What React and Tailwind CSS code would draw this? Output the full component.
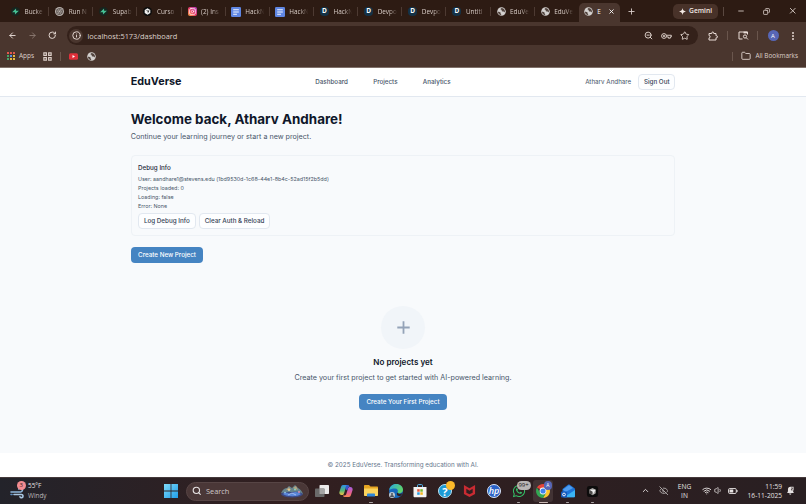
import React from 'react';
import {
    ArrowLeft, ArrowRight, RotateCw, Info, X, Plus, Minus, Copy,
    ZoomOut, Star, Folder, Search, ChevronUp, EyeOff, Wifi, Volume1,
    MoreVertical, Instagram,
} from 'lucide-react';
import { FaWhatsapp } from 'react-icons/fa';
import { SiOpenai } from 'react-icons/si';

/* ---------- Favicons ---------- */

const SupabaseIcon = () => (
    <svg viewBox="0 0 16 16" className="w-[9px] h-[9px]">
        <circle cx="8" cy="8" r="8" fill="#17251f" />
        <path d="M9 2.5v4h5L7 13.5v-4H2z" fill="#46c093" />
    </svg>
);

const OpenAiIcon = () => (
    <span className="w-[9px] h-[9px] rounded-full bg-[#b9b2ae] flex items-center justify-center">
        <SiOpenai size={7} color="#3a302c" />
    </span>
);

const CursorIcon = () => (
    <svg viewBox="0 0 16 16" className="w-[9px] h-[9px]">
        <circle cx="8" cy="8" r="8" fill="#0c0c0c" />
        <path d="M8 2.4l5 2.8v5.6l-5 2.8-5-2.8V5.200z" fill="#f1f1f1" />
        <path d="M5 6h6.500L8.500 11.500V8z" fill="#2a2a2a" />
    </svg>
);

const InstagramIcon = () => (
    <span className="w-[9px] h-[9px] rounded-[2px] bg-linear-to-tr from-[#f9a03a] via-[#e8386b] to-[#b23bc4] flex items-center justify-center">
        <Instagram size={7} color="#fff" strokeWidth={2.2} />
    </span>
);

const DocsIcon = () => (
    <svg viewBox="0 0 16 16" className="w-[10px] h-[10px]">
        <rect width="16" height="16" rx="2" fill="#5f86e3" />
        <path d="M3.5 4.5h9M3.5 8h9M3.5 11.5h6" stroke="#f2f5ff" strokeWidth="1.7" />
    </svg>
);

const DevpostIcon = () => (
    <span className="w-[9px] h-[9px] rounded-[4px] bg-[#143247] text-white text-[6.500px] leading-none font-bold flex items-center justify-center">
        D
    </span>
);

const GlobeIcon = () => (
    <svg viewBox="0 0 16 16" className="w-[9px] h-[9px]">
        <circle cx="8" cy="8" r="7.6" fill="#d3d0ce" />
        <path
            d="M1.6 8.6c2 .2 4.4.2 4.8 1.6.3 1.3-.2 2 1 3.2.4.5.2 1 0 1.2C4.2 14.2 1.7 12 1.6 8.6zM8.4 1.7c-1 .8-2 1-2 2.200 0 1 1.300.8 1.800 1.500.6.9-.2 1.600.8 2 1.400.5 1.700 0 2.800.8.8.6 1 1.300 2.200 1.200.9-3.600-1.400-7.300-5.600-7.700z"
            fill="#51433d"
        />
    </svg>
);

const tabs = [
    { icon: SupabaseIcon, title: 'Bucke' },
    { icon: OpenAiIcon, title: 'Run N' },
    { icon: SupabaseIcon, title: 'Supab' },
    { icon: CursorIcon, title: 'Curso' },
    { icon: InstagramIcon, title: '(2) Ins' },
    { icon: DocsIcon, title: 'HackN' },
    { icon: DocsIcon, title: 'HackN' },
    { icon: DevpostIcon, title: 'HackN' },
    { icon: DevpostIcon, title: 'Devpo' },
    { icon: DevpostIcon, title: 'Devpo' },
    { icon: DevpostIcon, title: 'Untitl' },
    { icon: GlobeIcon, title: 'EduVe' },
    { icon: GlobeIcon, title: 'EduVe' },
];

/* ---------- Browser chrome ---------- */

const TabStrip = () => (
    <div className="h-[22px] bg-[#2d1b13] flex items-center pl-[5px] text-[#d9cdc7]">
        {tabs.map(({ icon: Icon, title }, i) => (
            <div key={i} className="w-[44.15px] h-[22px] shrink-0 flex items-center pl-[5.5px] pt-px">
                <span className="w-[10px] flex justify-center shrink-0"><Icon /></span>
                <span className="ml-[4px] w-[22px] shrink-0 whitespace-nowrap text-[6.4px] leading-[10px] [mask-image:linear-gradient(to_right,black_50%,transparent_88%)]">
                    {title}
                </span>
                <span className={`ml-auto w-px h-[9px] ${i < 12 ? 'bg-[#4d3a32]' : ''}`} />
            </div>
        ))}
        <div className="w-[41px] h-[19px] self-end shrink-0 rounded-t-[5px] bg-[#4a362e] flex items-center pl-[5.5px] pb-[2px]">
            <GlobeIcon />
            <span className="ml-[4px] w-[6px] whitespace-nowrap text-[6.4px] leading-[10px] text-white">E</span>
            <X size={7} strokeWidth={3} className="ml-[5px] text-white" />
        </div>
        <Plus size={9} strokeWidth={2.4} className="ml-[7px] shrink-0" />
        <div className="ml-[37px] w-[45.5px] h-[15px] shrink-0 rounded-[5px] bg-[#483229] text-[#f3e9e4] flex items-center justify-center gap-[3px]">
            <svg viewBox="0 0 16 16" className="w-[7px] h-[7px]">
                <path d="M8 0c.8 4.8 3.2 7.200 8 8-4.800.8-7.200 3.200-8 8-.8-4.800-3.200-7.200-8-8 4.800-.8 7.200-3.200 8-8z" fill="currentColor" />
            </svg>
            <span className="text-[6.7px] leading-[10px] font-semibold">Gemini</span>
        </div>
        <span className="ml-[5px] w-px h-[9px] shrink-0 bg-[#5a4840]" />
        <Minus size={8} strokeWidth={2.6} className="ml-[13px] shrink-0" />
        <Copy size={7} strokeWidth={2.8} className="ml-[18px] shrink-0 -scale-x-100" />
        <X size={9.5} strokeWidth={2.3} className="ml-[18px] shrink-0" />
    </div>
);

const KeyIcon = () => (
    <svg viewBox="0 0 22 12" className="w-[11px] h-[6px]" fill="none" stroke="currentColor" strokeWidth="1.8">
        <circle cx="6" cy="6" r="4.8" />
        <circle cx="6" cy="6" r="1.2" fill="currentColor" />
        <path d="M10.8 4.5h9.8v3.3h-2v2.5h-4v-2.5h-3.8" />
    </svg>
);

const ExtensionIcon = () => (
    <svg viewBox="0 0 20 20" className="w-[10px] h-[10px]" fill="none" stroke="currentColor" strokeWidth="2">
        <path d="M2 5h5.5V4a2 2 0 0 1 4 0v1H16v4.5h1a1.9 1.9 0 0 1 0 4h-1V18H2v-4.2a2.3 2.3 0 0 0 0-4.6z" strokeLinejoin="round" />
    </svg>
);

const SidePanelSearchIcon = () => (
    <svg viewBox="0 0 22 18" className="w-[11px] h-[9px]" fill="none" stroke="currentColor" strokeWidth="2">
        <path d="M9 16H2V2h17v5" />
        <path d="M11 3h8" strokeWidth="3.5" />
        <circle cx="14" cy="11" r="3.2" />
        <path d="M16.500 13.500l3.5 3.5" />
    </svg>
);

const Toolbar = () => (
    <div className="h-[26px] bg-[#4a362e] flex items-center text-[#e9dcd6] pl-[8px] pt-px">
        <ArrowLeft size={9} strokeWidth={2.5} className="shrink-0" />
        <ArrowRight size={9} strokeWidth={2.3} className="ml-[11px] shrink-0 text-[#8f7e76]" />
        <RotateCw size={8.5} strokeWidth={2.7} className="ml-[11px] shrink-0" />
        <div className="ml-[10.5px] w-[631px] h-[19px] shrink-0 rounded-full bg-[#34211a] flex items-center pl-[2px] pr-[8.5px]">
            <span className="w-[14px] h-[14px] rounded-full bg-[#4a362e] flex items-center justify-center">
                <Info size={9} strokeWidth={2.5} />
            </span>
            <span className="ml-[4.5px] text-[7.4px] leading-[12px] text-[#ded2cc]">
                localhost:5173/dashboard
            </span>
            <div className="ml-auto flex items-center">
                <ZoomOut size={9} strokeWidth={2.4} />
                <span className="ml-[8.5px]"><KeyIcon /></span>
                <Star size={9.5} strokeWidth={2.2} className="ml-[8px]" />
            </div>
        </div>
        <span className="ml-[10px]"><ExtensionIcon /></span>
        <span className="ml-[9px] w-px h-[9px] bg-[#6a564d]" />
        <span className="ml-[9.5px]"><SidePanelSearchIcon /></span>
        <span className="ml-[8.5px] w-px h-[9px] bg-[#6a564d]" />
        <span className="ml-[9.5px] w-[11px] h-[11px] rounded-full bg-[#5766b6] text-white text-[6px] leading-none flex items-center justify-center">A</span>
        <MoreVertical size={10} strokeWidth={2.8} className="ml-[9.5px]" />
    </div>
);

const appColors = [
    'bg-[#e2574c]', 'bg-[#e2574c]', 'bg-[#e2574c]',
    'bg-[#46a567]', 'bg-[#5a8fe0]', 'bg-[#e8b941]',
    'bg-[#46a567]', 'bg-[#e8b941]', 'bg-[#e8b941]',
];

const BookmarksBar = () => (
    <div className="h-[20px] bg-[#4a362e] border-b border-[#80716a] flex items-center text-[#ddd0ca] pl-[7px] pr-[8px] pb-[3px]">
        <div className="grid grid-cols-3 gap-[1px]">
            {appColors.map((color, i) => (
                <span key={i} className={`w-[2px] h-[2px] ${color}`} />
            ))}
        </div>
        <span className="ml-[4px] text-[6.5px] leading-[10px]">Apps</span>
        <svg viewBox="0 0 16 16" className="ml-[8.5px] w-[9px] h-[9px]" fill="none" stroke="currentColor" strokeWidth="2">
            <path d="M1.5 1.5h4.500v4.500H1.500zM10 1.500h4.500v4.500H10zM1.500 10h4.500v4.500H1.500zM10 10h4.500v4.500H10z" />
        </svg>
        <span className="ml-[8px] w-px h-[9px] bg-[#6a564d]" />
        <svg viewBox="0 0 18 13" className="ml-[8px] w-[9px] h-[7px]">
            <rect width="18" height="13" rx="3" fill="#e0303a" />
            <path d="M7 3.5v6l5-3z" fill="#fff" />
        </svg>
        <span className="ml-[9px]"><GlobeIcon /></span>
        <div className="ml-auto flex items-center">
            <span className="w-px h-[9px] bg-[#6a564d]" />
            <Folder size={10} strokeWidth={2.2} className="ml-[8.5px]" />
            <span className="ml-[4px] text-[6.4px] leading-[10px] whitespace-nowrap">All Bookmarks</span>
        </div>
    </div>
);

/* ---------- Page ---------- */

const outlineButton =
    'h-[15.5px] rounded-[4px] border border-[#e2e8f0] bg-[#fdfeff] pt-[0.5px] text-[6.28px] leading-none font-medium text-[#334155] flex items-center justify-center';

const primaryButton =
    'h-[16px] rounded-[4px] bg-[#4584c2] pt-[0.5px] text-[6.28px] leading-none font-medium text-white flex items-center justify-center';

const Header = () => (
    <header className="h-[29px] bg-white border-b border-[#e2e8f0] shrink-0">
        <div className="w-[544.5px] mx-auto h-full flex items-center">
            <span className="w-[184.5px] text-[10.8px] leading-[14px] font-bold text-[#0f172a]">EduVerse</span>
            <nav className="flex gap-[25.3px] text-[6.25px] leading-[9px] font-medium text-[#475569]">
                <a>Dashboard</a>
                <a>Projects</a>
                <a>Analytics</a>
            </nav>
            <div className="ml-auto flex items-center gap-[7px]">
                <span className="text-[6.25px] leading-[9px] text-[#475569]">Atharv Andhare</span>
                <button className={`w-[37px] ${outlineButton}`}>Sign Out</button>
            </div>
        </div>
    </header>
);

const DebugCard = () => (
    <section className="mt-[13px] h-[81px] rounded-[4px] border border-[#eef2f6] pl-[6.3px] pt-[7.5px]">
        <h3 className="text-[6.25px] leading-[9px] font-medium text-[#1e293b]">Debug Info</h3>
        <div className="mt-[2.5px] text-[5.37px] leading-[9px] text-[#475569]">
            <p>User: aandhare1@stevens.edu (1bd9530d-1c68-44e1-8b4c-52ad15f2b5dd)</p>
            <p>Projects loaded: 0</p>
            <p>Loading: false</p>
            <p>Error: None</p>
        </div>
        <div className="mt-[2px] flex gap-[3.5px]">
            <button className={`w-[57.5px] ${outlineButton}`}>Log Debug Info</button>
            <button className={`w-[71px] ${outlineButton}`}>Clear Auth &amp; Reload</button>
        </div>
    </section>
);

const Dashboard = () => (
    <main className="flex-1 w-[544.5px] mx-auto">
        <h1 className="mt-[14px] text-[13.42px] leading-[17px] font-bold text-[#0f172a]">Welcome back, Atharv Andhare!</h1>
        <p className="mt-[3px] text-[7.16px] leading-[11px] text-[#475569]">Continue your learning journey or start a new project.</p>
        <DebugCard />
        <button className={`mt-[10.5px] w-[72.5px] ${primaryButton}`}>Create New Project</button>

        {/* Empty state */}
        <div className="mt-[43px] flex flex-col items-center">
            <div className="w-[43.5px] h-[43.5px] rounded-full bg-[#f1f5f9] flex items-center justify-center">
                <svg viewBox="0 0 13 13" className="w-[13px] h-[13px]" stroke="#94a3b8" strokeWidth="1.8">
                    <path d="M6.5 .3v12.4M.3 6.5h12.4" />
                </svg>
            </div>
            <h3 className="mt-[7px] text-[8.1px] leading-[12px] font-semibold text-[#0f172a]">No projects yet</h3>
            <p className="mt-[4px] text-[7.16px] leading-[11px] text-[#475569]">Create your first project to get started with AI-powered learning.</p>
            <button className={`mt-[11px] w-[88px] ${primaryButton}`}>Create Your First Project</button>
        </div>
    </main>
);

const Page = () => (
    <div className="h-[409px] bg-[#f8fafc] flex flex-col overflow-hidden font-['Inter',sans-serif]">
        <Header />
        <Dashboard />
        <footer className="h-[24px] shrink-0 bg-white flex items-center justify-center text-[6.28px] leading-[9px] text-[#64748b]">
            © 2025 EduVerse. Transforming education with AI.
        </footer>
    </div>
);

/* ---------- Taskbar ---------- */

const WeatherIcon = () => (
    <div className="relative w-[16px] h-[16px]">
        <svg viewBox="0 0 16 16" className="w-full h-full" fill="none" strokeLinecap="round" strokeWidth="1.6">
            <path d="M1 9h9.5a2 2 0 1 0-1.8-3" stroke="#8fb8dc" />
            <path d="M4 11.5h7.5a1.6 1.6 0 1 1-1.5 2.300" stroke="#a9c7e2" />
            <path d="M1 11.500h1" stroke="#5f8fc0" />
        </svg>
        <span className="absolute right-0 top-[-2px] w-[9.5px] h-[9.5px] rounded-full bg-[#f28b91] text-[#3d1b1e] text-[6px] leading-none flex items-center justify-center">3</span>
    </div>
);

const WindowsIcon = () => (
    <svg viewBox="0 0 14 14" className="w-[14px] h-[14px]">
        <linearGradient id="win" x1="0" y1="0" x2="1" y2="1">
            <stop offset="0" stopColor="#7fdcfb" />
            <stop offset="1" stopColor="#1f9de8" />
        </linearGradient>
        <path d="M0 0h6.6v6.6H0zM7.4 0H14v6.6H7.4zM0 7.4h6.6V14H0zM7.4 7.4H14V14H7.4z" fill="url(#win)" />
    </svg>
);

const SearchArt = () => (
    <svg viewBox="0 0 24 14" className="w-[24px] h-[14px]">
        <ellipse cx="12" cy="10" rx="11" ry="3.5" fill="#3c4a86" />
        <path d="M1 9c2-4 4-5 6-5l2-2 3 2 3-3 3 3c2 1 4 3 5 6-5-3-7-2-11-2S5 8 1 9z" fill="#66858f" />
        <path d="M3 10c4-3 6 1 9-1s6-1 9 1c-3 3-14 3-18 0z" fill="#5a86d8" />
        <path d="M6 6l3-3 2 3zM13 4l3-2 2 4z" fill="#b9a37d" />
        <circle cx="9" cy="6" r="1" fill="#e6d49a" />
        <circle cx="15" cy="5.5" r="1" fill="#8fd3b4" />
        <circle cx="19" cy="8" r="1" fill="#d98fb6" />
        <circle cx="5" cy="8.5" r=".8" fill="#9fd4f0" />
        <path d="M8 11l4-2 4 2" stroke="#b4c9f4" strokeWidth=".8" fill="none" />
    </svg>
);

const TaskViewIcon = () => (
    <svg viewBox="0 0 14 14" className="w-[14px] h-[14px]">
        <rect x="4.5" y="1" width="9.5" height="9" rx=".8" fill="#ecebeb" />
        <rect x="0" y="4.5" width="9.5" height="8.5" rx=".8" fill="#6a6a6a" />
        <rect x="4.5" y="4.5" width="5" height="5.5" fill="#a5a5a5" />
    </svg>
);

const CopilotIcon = () => (
    <svg viewBox="0 0 14 14" className="w-[14px] h-[14px]">
        <linearGradient id="copA" x1="0" y1="0" x2="0" y2="1">
            <stop offset="0" stopColor="#2f8fe6" />
            <stop offset=".55" stopColor="#52b77a" />
            <stop offset="1" stopColor="#f3c443" />
        </linearGradient>
        <linearGradient id="copB" x1="0" y1="0" x2="0" y2="1">
            <stop offset="0" stopColor="#a35ce0" />
            <stop offset=".6" stopColor="#e8608f" />
            <stop offset="1" stopColor="#f5874f" />
        </linearGradient>
        <path d="M4 1h4.5c1 0 1.3.8 1.5 1.5H8.5C7 2.5 6.8 3.5 6.4 5L5 9.5C4.6 11 4 11 2.8 11 .8 11 0 9.5.4 8L2 3c.4-1.3 1-2 2-2z" fill="url(#copA)" />
        <path d="M10 13H5.5c-1 0-1.3-.8-1.5-1.5h1.5C7 11.5 7.2 10.5 7.6 9L9 4.5C9.4 3 10 3 11.2 3c2 0 2.8 1.5 2.4 3L12 11c-.4 1.3-1 2-2 2z" fill="url(#copB)" />
        <path d="M8.5 1c1.5 0 1.7 1 2.2 2-1 0-1.5.4-1.9 1.8L8.3 6.5 6.4 5C6.8 3 7 1 8.5 1z" fill="#3558cf" />
    </svg>
);

const ExplorerIcon = () => (
    <svg viewBox="0 0 14 14" className="w-[14px] h-[14px]">
        <path d="M0 2c0-.6.4-1 1-1h4l1.500 1.600H13c.6 0 1 .4 1 1V6H0z" fill="#e5a422" />
        <path d="M0 4.5h14V11c0 .6-.4 1-1 1H1c-.6 0-1-.4-1-1z" fill="#fbd35d" />
        <path d="M3 10.500c0-.6.4-1 1-1h6c.6 0 1 .4 1 1V12.500H3z" fill="#2f86d8" />
    </svg>
);

const EdgeIcon = () => (
    <div className="relative w-[14px] h-[14px]">
        <svg viewBox="0 0 14 14" className="w-full h-full">
            <linearGradient id="edge" x1="0" y1="0" x2="1" y2=".4">
                <stop offset="0" stopColor="#29a6e0" />
                <stop offset="1" stopColor="#5fd36a" />
            </linearGradient>
            <circle cx="7" cy="7" r="7" fill="#1769bd" />
            <path d="M.2 6C.8 2.5 3.5 0 7.2 0 11.2 0 14 2.7 14 5.8c0 2.2-1.7 3.5-3.7 3.5-1.5 0-2-.7-1.7-1.3.9-1.6-.1-3.6-2.6-3.6C3.3 4.4 1 5 .2 6z" fill="url(#edge)" />
            <path d="M8.4 8.6c.8 1.800 3.800 1.600 5.200.2-.5 1.500-1.300 2.500-2.300 3.300-2.500.6-4.500-1.600-2.900-3.500z" fill="#2e2022" />
        </svg>
        <span className="absolute left-0 bottom-0 w-[6.5px] h-[6.5px] rounded-full bg-[#bcc6cf] flex flex-col items-center justify-center">
            <span className="w-[2px] h-[2px] rounded-full bg-[#47525d]" />
            <span className="w-[4px] h-[2px] rounded-t-full bg-[#47525d]" />
        </span>
    </div>
);

const StoreIcon = () => (
    <svg viewBox="0 0 14 14" className="w-[14px] h-[14px]">
        <path d="M4.5 3V1.5c0-.5.3-.9.9-.9h3.200c.6 0 .9.4.9.9V3" fill="none" stroke="#54b6ee" strokeWidth="1" />
        <path d="M.5 3h13v9c0 .8-.5 1.3-1.3 1.3H1.8C1 13.3.5 12.8.5 12z" fill="#f3f3f3" />
        <path d="M4.2 5.2h2.5v2.5H4.2z" fill="#e8553a" />
        <path d="M7.3 5.2h2.5v2.5H7.3z" fill="#79b72c" />
        <path d="M4.2 8.3h2.5v2.5H4.2z" fill="#2a9be0" />
        <path d="M7.3 8.3h2.5v2.5H7.3z" fill="#f5b721" />
    </svg>
);

const HelpIcon = () => (
    <div className="relative w-[14px] h-[14px] rounded-full bg-[#1b9ad6] border border-[#bfe4f5] text-white text-[11px] leading-none font-bold flex items-center justify-center">
        ?
        <span className="absolute right-[-4px] top-[-4px] w-[9px] h-[9px] rounded-full bg-[#fcb92a]" />
    </div>
);

const McAfeeIcon = () => (
    <svg viewBox="0 0 14 14" className="w-[13px] h-[14px]">
        <path d="M1 .5L7 4l6-3.500v9.800L7 13.5l-6-3.2zM3.600 4.600v4.200L7 10.600l3.400-1.800V4.600L7 6.700z" fill="#c92b32" fillRule="evenodd" />
    </svg>
);

const HpIcon = () => (
    <span className="w-[14px] h-[14px] rounded-full bg-[#2a63c8] border border-[#dbe6fa] text-white text-[9px] leading-[9px] italic font-semibold flex items-center justify-center pb-[2px]">
        hp
    </span>
);

const WhatsAppIcon = () => (
    <div className="relative w-[14px] h-[14px]">
        <FaWhatsapp size={14} color="#35c168" />
        <span className="absolute left-[5px] top-[-3px] w-[14px] h-[8.5px] rounded-full bg-[#b9b5b4] text-[#1d1a1a] text-[6px] leading-none flex items-center justify-center">99+</span>
    </div>
);

const ChromeIcon = () => (
    <div className="relative w-[14px] h-[14px]">
        <svg viewBox="0 0 14 14" className="w-full h-full">
            <path d="M7 7L.94 3.5A7 7 0 0 1 13.06 3.5H7z" fill="#e5443a" />
            <path d="M7 7V3.5h6.06A7 7 0 0 1 7 14l3-5.2z" fill="#fbc52c" />
            <path d="M7 7l3.03 1.75L7 14A7 7 0 0 1 .94 3.5L4 8.8z" fill="#33a853" />
            <circle cx="7" cy="7" r="3.4" fill="#fff" />
            <circle cx="7" cy="7" r="2.6" fill="#3f83ee" />
        </svg>
        <span className="absolute right-[-2px] top-[-3px] w-[8.5px] h-[8.5px] rounded-full bg-[#5766b6] text-white text-[5px] leading-none flex items-center justify-center">A</span>
    </div>
);

const OutlookIcon = () => (
    <svg viewBox="0 0 14 14" className="w-[14px] h-[14px]">
        <path d="M1.5 5L7 .8c.6-.4 1.100-.4 1.700 0l4.500 3.200c.5.4.8.8.8 1.400V12c0 .8-.5 1.300-1.300 1.300H3c-.8 0-1.500-.6-1.500-1.300z" fill="#1c74d8" />
        <path d="M2 5.600L8 1.200l4 2.800L4.500 8z" fill="#4f9df0" />
        <path d="M3 13.3L14 6v6c0 .8-.5 1.3-1.3 1.3z" fill="#3ab4f5" />
        <rect x="0" y="7.500" width="6" height="6" rx="1" fill="#1559b8" />
        <circle cx="3" cy="10.500" r="1.400" fill="none" stroke="#fff" strokeWidth=".9" />
    </svg>
);

const CursorAppIcon = () => (
    <svg viewBox="0 0 14 14" className="w-[13px] h-[13px]">
        <rect x="1" y="1" width="12" height="12" rx="2.5" fill="#0d0c0c" />
        <path d="M7 3.2l3.5 2V9L7 11 3.500 9V5.200z" fill="#a9a7a5" />
        <path d="M3.800 5.200h6.600L7 10.800V7.200z" fill="#efefef" />
        <path d="M3.800 5.300L7 7.200v3.600L3.600 9z" fill="#4d4c4b" />
    </svg>
);

const apps = [
    { icon: TaskViewIcon },
    { icon: CopilotIcon },
    { icon: ExplorerIcon, open: true },
    { icon: EdgeIcon },
    { icon: StoreIcon },
    { icon: HelpIcon },
    { icon: McAfeeIcon },
    { icon: HpIcon },
    { icon: WhatsAppIcon, open: true },
    { icon: ChromeIcon, active: true },
    { icon: OutlookIcon, open: true },
    { icon: CursorAppIcon, open: true },
];

const BatteryIcon = () => (
    <svg viewBox="0 0 20 12" className="w-[10px] h-[6px]">
        <rect x="1" y="1" width="15.5" height="10" rx="2.5" fill="none" stroke="currentColor" strokeWidth="1.8" />
        <rect x="3" y="3" width="7.5" height="6" fill="currentColor" />
        <path d="M18 4v4" stroke="currentColor" strokeWidth="2.2" />
    </svg>
);

const BellIcon = () => (
    <svg viewBox="0 0 16 16" className="w-[9px] h-[9px]">
        <path d="M2 12.5l1.5-3V6A4.500 4.500 0 0 1 8 1.500h5.500v5l-1 3 1.500 3z" fill="currentColor" />
        <path d="M5.500 13.500a2 2 0 0 0 4 0z" fill="currentColor" />
        <path d="M9 3.500h3L9 7h3" stroke="#2b1f20" strokeWidth="1.200" fill="none" />
    </svg>
);

const Taskbar = () => (
    <div className="h-[27px] bg-linear-to-r from-[#23232a] via-[#321f20] via-35% to-[#291f22] border-t border-[#453a3b] flex items-center text-[#e6e2e2]">
        <div className="w-[163px] pl-[10px] pb-px flex items-center shrink-0">
            <WeatherIcon />
            <div className="ml-[2px] text-[6.4px] leading-[9.5px]">
                <p>55°F</p>
                <p className="text-[#bdb8b9]">Windy</p>
            </div>
        </div>
        <span className="ml-[1px]"><WindowsIcon /></span>
        <div className="ml-[7.5px] w-[123px] h-[19px] shrink-0 rounded-full bg-[#4a3737] border border-[#574545] flex items-center pl-[5.5px] pr-[4px]">
            <Search size={9.5} strokeWidth={2.8} />
            <span className="ml-[4.5px] text-[7.4px] leading-[11px] text-[#cfc8c8]">Search</span>
            <span className="ml-auto"><SearchArt /></span>
        </div>
        <div className="ml-[1px] flex h-full">
            {apps.map(({ icon: Icon, open, active }, i) => (
                <div key={i} className="w-[24.6px] h-full flex items-center justify-center relative">
                    {active && <span className="absolute inset-x-[2px] inset-y-[2px] rounded-[3px] bg-[#423334]" />}
                    <span className="relative"><Icon /></span>
                    {open && <span className="absolute bottom-[1px] w-[3.5px] h-[1.5px] rounded-full bg-[#a9a3a3]" />}
                    {active && <span className="absolute bottom-[1px] w-[9px] h-[1.5px] rounded-full bg-[#c9b8b4]" />}
                </div>
            ))}
        </div>
        <div className="ml-auto pr-[11px] pb-px flex items-center">
            <ChevronUp size={9} strokeWidth={2.4} />
            <EyeOff size={9.5} strokeWidth={2.2} className="ml-[9px] text-[#b5b0b0]" />
            <div className="ml-[9px] w-[15px] text-[6.6px] leading-[9px] text-center">
                <p>ENG</p>
                <p>IN</p>
            </div>
            <Wifi size={9.5} strokeWidth={2.4} className="ml-[9.5px]" />
            <Volume1 size={9} strokeWidth={2} className="ml-[2.5px]" />
            <span className="ml-[5px]"><BatteryIcon /></span>
            <div className="ml-[9px] w-[35.5px] text-[6.6px] leading-[9px] text-right whitespace-nowrap">
                <p>11:59</p>
                <p>16-11-2025</p>
            </div>
            <span className="ml-[4px]"><BellIcon /></span>
        </div>
    </div>
);

export default function App() {
    return (
        <div className="w-[806px] h-[504px] overflow-hidden flex flex-col font-['Open_Sans','Noto_Sans',sans-serif] [&_svg]:block">
            <TabStrip />
            <Toolbar />
            <BookmarksBar />
            <Page />
            <Taskbar />
        </div>
    );
}
